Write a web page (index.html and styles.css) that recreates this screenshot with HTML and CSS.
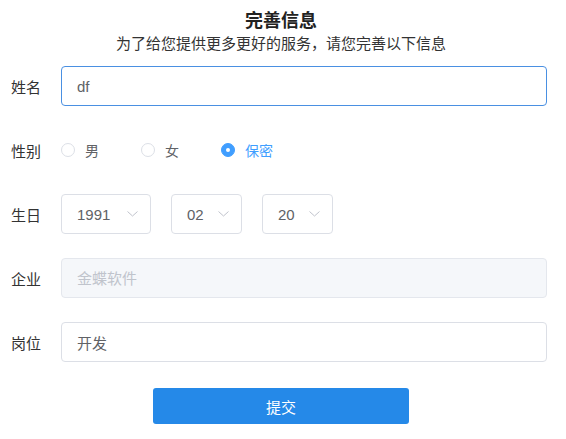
FILE: index.html
```html
<!DOCTYPE html>
<html lang="zh-CN">
<head>
    <meta charset="UTF-8">
    <meta name="viewport" content="width=device-width, initial-scale=1.0">
    <link rel="stylesheet" href="styles.css">
    <title>完善信息</title>
</head>
<body>
    <div id="page">
        <div class="header">
            <h1>完善信息</h1>
            <p>为了给您提供更多更好的服务，请您完善以下信息</p>
        </div>

        <form class="info-form" onsubmit="return false">
            <div class="form-item">
                <label class="item-label" for="name">姓名</label>
                <input class="text-input focused" type="text" id="name" value="df">
            </div>

            <div class="form-item">
                <span class="item-label">性别</span>
                <div class="radio-group">
                    <label class="radio"><span class="radio-dot"></span>男</label>
                    <label class="radio"><span class="radio-dot"></span>女</label>
                    <label class="radio checked"><span class="radio-dot"></span>保密</label>
                </div>
            </div>

            <div class="form-item">
                <span class="item-label">生日</span>
                <div class="select-group">
                    <div class="select year">
                        <span>1991</span>
                        <svg width="11" height="6" viewBox="0 0 11 6"><polyline points="0.5,0.5 5.5,5 10.5,0.5" fill="none" stroke="#c0c4cc" stroke-width="1"/></svg>
                    </div>
                    <div class="select">
                        <span>02</span>
                        <svg width="11" height="6" viewBox="0 0 11 6"><polyline points="0.5,0.5 5.5,5 10.5,0.5" fill="none" stroke="#c0c4cc" stroke-width="1"/></svg>
                    </div>
                    <div class="select">
                        <span>20</span>
                        <svg width="11" height="6" viewBox="0 0 11 6"><polyline points="0.5,0.5 5.5,5 10.5,0.5" fill="none" stroke="#c0c4cc" stroke-width="1"/></svg>
                    </div>
                </div>
            </div>

            <div class="form-item">
                <label class="item-label" for="company">企业</label>
                <input class="text-input" type="text" id="company" placeholder="金蝶软件" disabled>
            </div>

            <div class="form-item">
                <label class="item-label" for="job">岗位</label>
                <input class="text-input" type="text" id="job" value="开发">
            </div>

            <div class="actions">
                <button class="submit-btn" type="submit">提交</button>
            </div>
        </form>
    </div>
</body>
</html>
```

FILE: styles.css
```css
body {
    margin: 0;
    padding: 0;
    background-color: #ffffff;
    font-family: "Liberation Sans", "Noto Sans CJK SC", sans-serif;
    color: #333;
}

#page {
    width: 562px;
    padding-top: 9px;
}

.header {
    text-align: center;
    margin-bottom: 11px;
}

.header h1 {
    margin: 0;
    font-size: 18px;
    line-height: 24px;
    font-weight: bold;
    color: #222;
}

.header p {
    margin: 0;
    font-size: 15px;
    line-height: 22px;
    color: #333;
}

.info-form {
    padding: 0 15px 0 11px;
}

.form-item {
    display: flex;
    align-items: center;
    height: 40px;
    margin-bottom: 24px;
}

.item-label {
    width: 50px;
    flex-shrink: 0;
    font-size: 15px;
    color: #333;
}

.text-input {
    flex: 1;
    height: 40px;
    box-sizing: border-box;
    padding: 0 15px;
    font-family: inherit;
    font-size: 15px;
    color: #606266;
    border: 1px solid #dcdfe6;
    border-radius: 4px;
    background-color: #fff;
    outline: none;
}

.text-input.focused {
    border-color: #4a90e2;
}

.text-input:disabled {
    background-color: #f5f7fa;
    border-color: #e4e7ed;
}

.text-input::placeholder {
    color: #c0c4cc;
}

.radio-group {
    display: flex;
    gap: 42px;
}

.radio {
    display: flex;
    align-items: center;
    font-size: 14px;
    color: #606266;
}

.radio-dot {
    width: 14px;
    height: 14px;
    box-sizing: border-box;
    border: 1px solid #dcdfe6;
    border-radius: 50%;
    margin-right: 10px;
    position: relative;
    background-color: #fff;
}

.radio.checked {
    color: #409eff;
}

.radio.checked .radio-dot {
    background-color: #409eff;
    border-color: #409eff;
}

.radio.checked .radio-dot::after {
    content: "";
    position: absolute;
    width: 4px;
    height: 4px;
    border-radius: 50%;
    background-color: #fff;
    left: 4px;
    top: 4px;
}

.select-group {
    display: flex;
    gap: 20px;
}

.select {
    width: 71px;
    height: 40px;
    box-sizing: border-box;
    border: 1px solid #dcdfe6;
    border-radius: 4px;
    padding: 0 12px 0 15px;
    display: flex;
    align-items: center;
    justify-content: space-between;
    font-size: 15px;
    color: #606266;
}

.select.year {
    width: 90px;
}

.actions {
    padding-top: 2px;
    margin-left: -11px;
    margin-right: -15px;
    text-align: center;
}

.submit-btn {
    width: 256px;
    height: 36px;
    border: none;
    border-radius: 3px;
    background-color: #2589e8;
    color: #fff;
    font-family: inherit;
    font-size: 15px;
    cursor: pointer;
}
```
